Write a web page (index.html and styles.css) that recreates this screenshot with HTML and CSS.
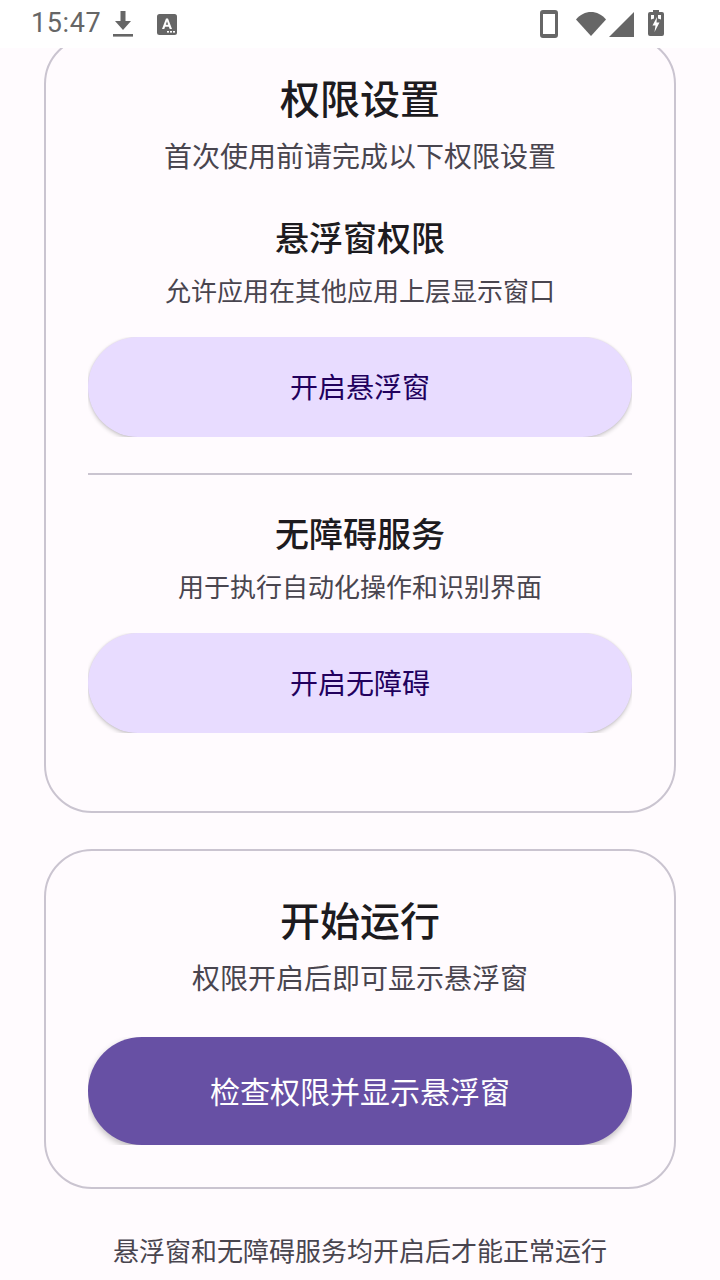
FILE: index.html
```html
<!DOCTYPE html>
<html lang="zh-CN">
<head>
<meta charset="utf-8">
<title>权限设置</title>
<link rel="stylesheet" href="styles.css">
</head>
<body>
<div class="screen">
  <header class="status">
    <div class="status-left">
      <span class="time">15:47</span>
      <svg class="ic-dl" viewBox="0 0 20 26" width="20" height="26"><path d="M7.500 0h5v10h5.500l-8 9-8-9h5.500z" fill="#666"/><rect x="0" y="23" width="20" height="2.600" fill="#666"/></svg>
      <svg class="ic-a" viewBox="0 0 20 22" width="20" height="22"><rect width="20" height="21" rx="2.500" fill="#666"/><path d="M5 15 9 4.500h2L15 15h-2.300l-.8-2.300H8.100L7.300 15zM8.800 10.800h2.400L10 7.300z" fill="#fff"/><rect x="10" y="17" width="2" height="1.600" fill="#fff"/><rect x="13" y="17" width="2" height="1.600" fill="#fff"/><rect x="16" y="17" width="2" height="1.600" fill="#fff"/></svg>
    </div>
    <div class="status-right">
      <svg class="ic-phone" viewBox="0 0 18 28" width="18" height="28"><path fill-rule="evenodd" d="M3 0h12a3 3 0 0 1 3 3v22a3 3 0 0 1-3 3H3a3 3 0 0 1-3-3V3a3 3 0 0 1 3-3zM3 4v20h12V4z" fill="#666"/></svg>
      <svg class="ic-wifi" viewBox="0 0 30 26" width="30" height="26"><path d="M0 8.500C8 -1.500 22-1.500 30 8.500L15 25z" fill="#666"/></svg>
      <svg class="ic-signal" viewBox="0 0 25 25" width="25" height="25"><path d="M25 0v25H0z" fill="#666"/></svg>
      <svg class="ic-batt" viewBox="0 0 16 26" width="16" height="26"><path fill-rule="evenodd" d="M5 0h6v2h3a2 2 0 0 1 2 2v20a2 2 0 0 1-2 2H2a2 2 0 0 1-2-2V4a2 2 0 0 1 2-2h3zM3 5v4.500l3-1V5zM10 5v3.500l3 1V5zM9 7 4.500 15.500H7.500L6.500 22 11.500 12.500H8.500z" fill="#666"/></svg>
    </div>
  </header>
  <main class="content">
    <section class="card card-clipped">
      <h1 class="title">权限设置</h1>
      <p class="sub">首次使用前请完成以下权限设置</p>
      <div class="perm perm-first">
        <h2 class="perm-title">悬浮窗权限</h2>
        <p class="perm-sub">允许应用在其他应用上层显示窗口</p>
        <button class="btn btn-tonal">开启悬浮窗</button>
      </div>
      <hr class="divider">
      <div class="perm">
        <h2 class="perm-title">无障碍服务</h2>
        <p class="perm-sub">用于执行自动化操作和识别界面</p>
        <button class="btn btn-tonal">开启无障碍</button>
      </div>
    </section>
    <section class="card card-run">
      <h1 class="title">开始运行</h1>
      <p class="sub">权限开启后即可显示悬浮窗</p>
      <button class="btn btn-primary">检查权限并显示悬浮窗</button>
    </section>
    <p class="foot">悬浮窗和无障碍服务均开启后才能正常运行</p>
  </main>
</div>
</body>
</html>
```

FILE: styles.css
```css
* { box-sizing: border-box; }
html, body { margin: 0; padding: 0; }
body {
  width: 720px;
  height: 1280px;
  overflow: hidden;
  background: #fffbfe;
  font-family: "Noto Sans CJK SC", Roboto, sans-serif;
  color: #1d1b20;
}
.screen { display: flex; flex-direction: column; height: 1280px; }
.status {
  height: 48px;
  flex: none;
  background: #fff;
  display: flex;
  justify-content: space-between;
  align-items: flex-start;
  padding: 0 56px 0 31px;
  position: relative;
  z-index: 1;
}
.status-left { display: flex; align-items: flex-start; }
.status-right { display: flex; align-items: flex-start; }
.time { font: 400 27px/46px Roboto, sans-serif; color: #666; letter-spacing: .6px; }
.ic-dl { margin: 11px 0 0 12px; }
.ic-a { margin: 14px 0 0 24px; }
.ic-phone { margin-top: 10px; }
.ic-wifi { margin: 11px 0 0 18px; }
.ic-signal { margin: 12px 0 0 3px; }
.ic-batt { margin: 10px 0 0 14px; }

.content {
  flex: 1;
  min-height: 0;
  padding: 0 44px;
  overflow: hidden;
}
.card {
  background: #fffbfe;
  border: 2px solid #cac4d0;
  border-radius: 48px;
  padding: 0 42px;
  text-align: center;
}
.card-clipped { margin-top: -12px; height: 777px; padding-top: 31px; }
.card-run { margin-top: 36px; height: 340px; padding-top: 40px; }
.title { margin: 0; font-size: 40px; line-height: 56px; font-weight: 500; color: #1d1b20; }
.sub { margin: 10px 0 0; font-size: 28px; line-height: 40px; font-weight: 400; color: #49454f; }
.perm-first { margin-top: 38px; }
.perm-title { margin: 0; font-size: 34px; line-height: 48px; font-weight: 500; color: #1d1b20; }
.perm-sub { margin: 11px 0 0; font-size: 26px; line-height: 36px; font-weight: 400; color: #49454f; }
.btn {
  display: block;
  width: 100%;
  border: 0;
  border-radius: 50px;
  padding: 0 0 2px;
  font-family: inherit;
  font-weight: 400;
  clip-path: inset(0);
}
.btn-tonal {
  height: 100px;
  margin-top: 29px;
  background: #e8dcff;
  color: #21005d;
  font-size: 28px;
  box-shadow: 0 2px 4px rgba(0,0,0,.2), 0 0 2px rgba(0,0,0,.1);
}
.btn-primary {
  height: 108px;
  margin-top: 40px;
  border-radius: 54px;
  background: #6750a4;
  color: #fff;
  font-size: 30px;
  box-shadow: 0 3px 6px rgba(0,0,0,.25);
}
.divider { border: 0; height: 2px; background: #cac4d0; margin: 36px 0 34px; }
.foot { margin: 43px 0 0; text-align: center; font-size: 26px; line-height: 36px; color: #49454f; }
```
